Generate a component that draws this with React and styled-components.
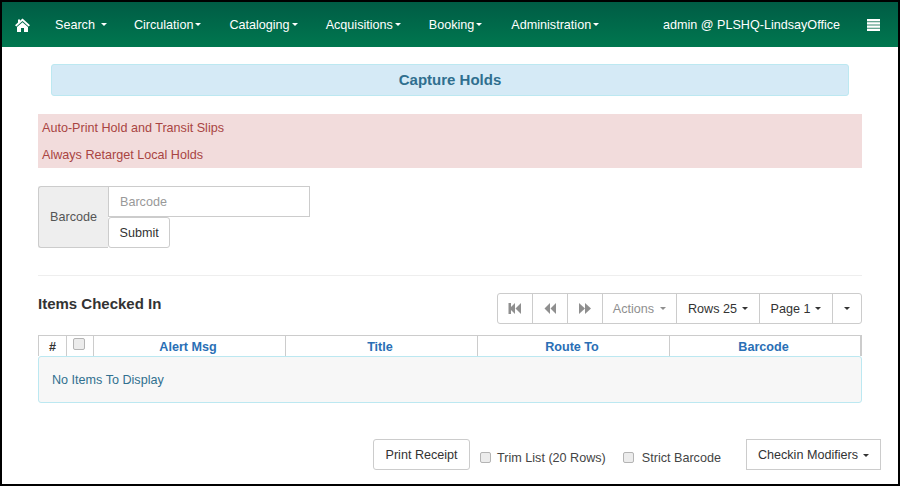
import React from 'react';
import styled, { createGlobalStyle } from 'styled-components';

const Global = createGlobalStyle`
    html, body {
        margin: 0;
        height: 100%;
        background: #fff;
    }
    body {
        font-family: "Liberation Sans", Arial, sans-serif;
        font-size: 12.6px;
        color: #333;
    }
`;

const Frame = styled.div`
    box-sizing: border-box;
    width: 900px;
    height: 486px;
    border: 2px solid #000;
    overflow: hidden;
    background: #fff;
`;

const Nav = styled.nav`
    display: flex;
    align-items: center;
    height: 45px;
    padding: 0 18px 0 13px;
    color: #fff;
    background: linear-gradient(to bottom, #005c45, #00774f);
`;

const NavItem = styled.span`
    display: flex;
    align-items: center;
    margin-left: ${p => p.$left}px;
    white-space: nowrap;
`;

const Spacer = styled.div`
    flex: 1;
`;

const Caret = styled.span`
    display: inline-block;
    width: 0;
    height: 0;
    margin-left: ${p => p.$gap ?? 2}px;
    vertical-align: middle;
    border-top: 3px solid currentColor;
    border-left: 3px solid transparent;
    border-right: 3px solid transparent;
`;

const Content = styled.main`
    padding: 17px 36px 0;
`;

const Banner = styled.div`
    box-sizing: border-box;
    height: 32px;
    margin: 0 13px 18px;
    padding-bottom: 1px;
    display: flex;
    align-items: center;
    justify-content: center;
    background: #d5eaf6;
    border: 1px solid #bce8f1;
    border-radius: 3px;
    color: #2f6f8f;
    font-size: 15px;
    font-weight: bold;
`;

const Alerts = styled.div`
    box-sizing: border-box;
    height: 54px;
    padding: 0 4px;
    display: flex;
    flex-direction: column;
    justify-content: space-around;
    background: #f2dcdc;
    color: #a94442;
`;

const BarcodeForm = styled.form`
    display: flex;
    margin: 18px 0 27px;
    height: 62px;
`;

const Addon = styled.div`
    box-sizing: border-box;
    width: 70px;
    display: flex;
    align-items: center;
    justify-content: center;
    background: #eee;
    border: 1px solid #ccc;
    border-right: 0;
    border-radius: 3px 0 0 3px;
    color: #555;
`;

const BarcodeFields = styled.div`
    display: flex;
    flex-direction: column;
    align-items: flex-start;
`;

const BarcodeInput = styled.input`
    box-sizing: border-box;
    width: 202px;
    height: 31px;
    padding: 0 11px;
    border: 1px solid #ccc;
    font: inherit;
    color: #555;
    outline: none;
    &::placeholder {
        color: #999;
        opacity: 1;
    }
`;

const Button = styled.button`
    box-sizing: border-box;
    height: 31px;
    padding: 0 ${p => p.$pad || 11.5}px;
    margin-left: ${p => p.$left || 0}px;
    background: #fff;
    border: 1px solid #ccc;
    border-radius: ${p => (p.$square ? 0 : 3)}px;
    font: inherit;
    color: #333;
    white-space: nowrap;
`;

const Rule = styled.hr`
    margin: 0;
    border: 0;
    border-top: 1px solid #eee;
`;

const ListHeader = styled.div`
    display: flex;
    justify-content: space-between;
    align-items: flex-start;
    margin-top: 17px;
    height: 42px;
`;

const ListTitle = styled.h2`
    margin: 2px 0 0;
    font-size: 15px;
    line-height: 17px;
    font-weight: bold;
    color: #333;
`;

const Pager = styled.div`
    display: flex;
    height: 31px;
    box-sizing: border-box;
    border: 1px solid #ccc;
    border-radius: 3px;
`;

const PagerCell = styled.div`
    box-sizing: border-box;
    width: ${p => p.$width}px;
    display: flex;
    align-items: center;
    justify-content: center;
    color: ${p => (p.$muted ? '#8f8f8f' : '#333')};
    border-left: ${p => (p.$first ? 0 : '1px solid #ccc')};
`;

const GridHead = styled.div`
    box-sizing: border-box;
    display: grid;
    grid-template-columns: 27px 27px 192px 192px 192px 1fr;
    height: 21px;
    border: 1px solid #ccc;
    border-right-width: 2px;
    border-bottom: 0;
`;

const HeadCell = styled.div`
    display: flex;
    align-items: center;
    justify-content: center;
    padding: 2px ${p => (p.$dark ? 0 : 3)}px 0 0;
    font-weight: bold;
    color: ${p => (p.$dark ? '#333' : '#2a6fb5')};
    border-left: ${p => (p.$first ? 0 : '1px solid #ccc')};
`;

const CheckCell = styled.div`
    display: flex;
    justify-content: center;
    padding: 2px 2px 0 0;
    border-left: 1px solid #ccc;
`;

const EmptyRow = styled.div`
    box-sizing: border-box;
    height: 47px;
    padding-left: 13px;
    display: flex;
    align-items: center;
    background: #f7f7f7;
    border: 1px solid #bce8f1;
    border-radius: 3px;
    color: #31708f;
`;

const Footer = styled.div`
    display: flex;
    align-items: flex-start;
    margin: 36px -19px 0 0;
    justify-content: flex-end;
`;

const CheckLabel = styled.label`
    display: flex;
    align-items: center;
    height: 31px;
    margin: 3px 0 0 ${p => p.$left}px;
    color: #444;
    white-space: nowrap;
`;

const Box = styled.input.attrs({ type: 'checkbox' })`
    appearance: none;
    box-sizing: border-box;
    width: ${p => p.$size || 11}px;
    height: ${p => p.$size || 11}px;
    margin: 0 ${p => p.$right || 0}px 0 0;
    background: #ececec;
    border: 1px solid #b4b4b4;
    border-radius: 2px;
`;

const HomeIcon = () => (
    <svg width="15" height="14" viewBox="0 0 15 14" fill="#fff">
        <path d="M7.5 0.5 L15 7.2 L13.6 8.4 L7.5 3 L1.4 8.4 L0 7.2 L3 4.5 V1.5 H5 V2.7 Z" />
        <path d="M7.5 4.2 L13 9 V14 H9 V10 H6 V14 H2 V9 Z" />
    </svg>
);

const ListIcon = () => (
    <svg width="13" height="12" viewBox="0 0 13 12" fill="#fff">
        <rect x="0" y="0" width="13" height="2.4" />
        <rect x="0" y="3.2" width="13" height="2.4" />
        <rect x="0" y="6.4" width="13" height="2.4" />
        <rect x="0" y="9.6" width="13" height="2.4" />
    </svg>
);

const PagerIcon = ({ kind }) => (
    <svg width="14" height="11" viewBox="0 0 14 11" fill="#8f8f8f">
        {kind === 'first' && <rect x="0.5" y="0" width="2.5" height="11" />}
        {kind === 'next' ? (
            <>
                <polygon points="1,0 7,5.5 1,11" />
                <polygon points="7,0 13,5.5 7,11" />
            </>
        ) : (
            <>
                <polygon points="7,0 1.5,5.5 7,11" />
                <polygon points="13,0 7.5,5.5 13,11" />
            </>
        )}
    </svg>
);

const menus = [
    { label: 'Search', left: 25, gap: 6 },
    { label: 'Circulation', left: 27, gap: 2 },
    { label: 'Cataloging', left: 28, gap: 2 },
    { label: 'Acquisitions', left: 28, gap: 2 },
    { label: 'Booking', left: 28, gap: 2 },
    { label: 'Administration', left: 29, gap: 2 },
];

const columns = ['Alert Msg', 'Title', 'Route To', 'Barcode'];

const App = () => {
    return (
        <Frame>
            <Global />
            <Nav>
                <HomeIcon />
                {menus.map(m => (
                    <NavItem key={m.label} $left={m.left}>
                        {m.label}
                        <Caret $gap={m.gap} />
                    </NavItem>
                ))}
                <Spacer />
                <NavItem $left={0}>admin @ PLSHQ-LindsayOffice</NavItem>
                <NavItem $left={27}><ListIcon /></NavItem>
            </Nav>
            <Content>
                <Banner>Capture Holds</Banner>
                <Alerts>
                    <div>Auto-Print Hold and Transit Slips</div>
                    <div>Always Retarget Local Holds</div>
                </Alerts>
                <BarcodeForm onSubmit={e => e.preventDefault()}>
                    <Addon>Barcode</Addon>
                    <BarcodeFields>
                        <BarcodeInput placeholder="Barcode" />
                        <Button $pad={10.5}>Submit</Button>
                    </BarcodeFields>
                </BarcodeForm>
                <Rule />
                <ListHeader>
                    <ListTitle>Items Checked In</ListTitle>
                    <Pager>
                        <PagerCell $first $width={34}><PagerIcon kind="first" /></PagerCell>
                        <PagerCell $width={35}><PagerIcon kind="prev" /></PagerCell>
                        <PagerCell $width={35}><PagerIcon kind="next" /></PagerCell>
                        <PagerCell $muted $width={74}>Actions<Caret $gap={6} /></PagerCell>
                        <PagerCell $width={83}>Rows 25<Caret $gap={5} /></PagerCell>
                        <PagerCell $width={73}>Page 1<Caret $gap={5} /></PagerCell>
                        <PagerCell $width={29}><Caret $gap={0} /></PagerCell>
                    </Pager>
                </ListHeader>
                <GridHead>
                    <HeadCell $first $dark>#</HeadCell>
                    <CheckCell><Box $size={12} /></CheckCell>
                    {columns.map(c => (
                        <HeadCell key={c}>{c}</HeadCell>
                    ))}
                </GridHead>
                <EmptyRow>No Items To Display</EmptyRow>
                <Footer>
                    <Button>Print Receipt</Button>
                    <CheckLabel $left={10}><Box $right={6} />Trim List (20 Rows)</CheckLabel>
                    <CheckLabel $left={17}><Box $right={8} />Strict Barcode</CheckLabel>
                    <Button $square $left={25} $pad={11}>
                        Checkin Modifiers<Caret $gap={5} />
                    </Button>
                </Footer>
            </Content>
        </Frame>
    );
};

export default App;
